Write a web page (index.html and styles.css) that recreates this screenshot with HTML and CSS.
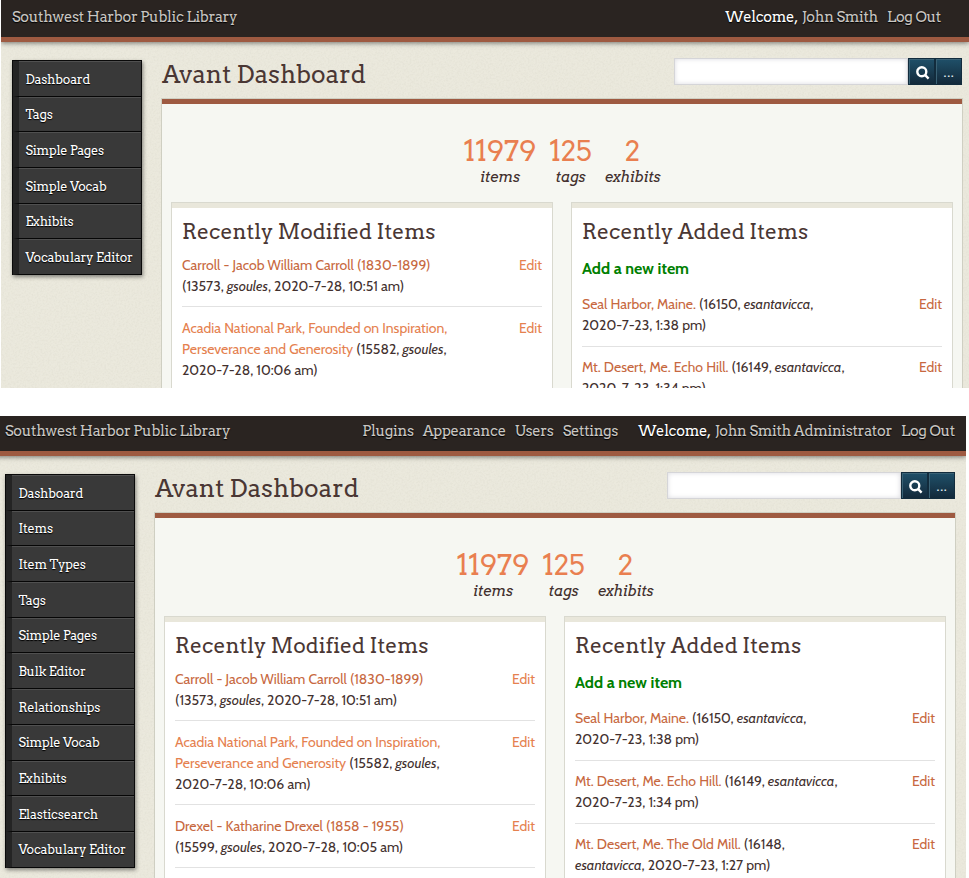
FILE: index.html
```html
<!DOCTYPE html>
<html lang="en">
<head>
<meta charset="utf-8">
<title>Avant Dashboard</title>
<link rel="stylesheet" href="styles.css">
</head>
<body>

<div class="shot shot-user">
  <div class="page">
    <header class="top">
      <a class="site">Southwest Harbor Public Library</a>
      <nav class="user"><span><b>Welcome,</b> John Smith</span><a>Log Out</a></nav>
    </header>
    <div class="columns">
      <nav class="side">
        <a>Dashboard</a><a>Tags</a><a>Simple Pages</a><a>Simple Vocab</a><a>Exhibits</a><a>Vocabulary Editor</a>
      </nav>
      <main>
        <div class="title">
          <h1>Avant Dashboard</h1>
          <div class="search">
            <div class="field"></div>
            <div class="btn"><svg viewBox="0 0 14 14" width="14" height="14"><circle cx="5.8" cy="5.8" r="4.5"/><path d="M9.2 9.2l3.4 3.4"/></svg></div>
            <div class="btn dots">...</div>
          </div>
        </div>
        <div class="content">
          <div class="stats">
            <div><b>11979</b><i>items</i></div><div><b>125</b><i>tags</i></div><div><b>2</b><i>exhibits</i></div>
          </div>
          <div class="panels">
            <section>
              <h2>Recently Modified Items</h2>
              <div class="row"><p><a>Carroll - Jacob William Carroll (1830-1899)</a><br>(13573, <i>gsoules</i>, 2020-7-28, 10:51 am)</p><a class="light">Edit</a></div>
              <div class="row"><p><a class="light">Acadia National Park, Founded on Inspiration,<br>Perseverance and Generosity</a> (15582, <i>gsoules</i>,<br>2020-7-28, 10:06 am)</p><a class="light">Edit</a></div>
            </section>
            <section>
              <h2>Recently Added Items</h2>
              <a class="add">Add a new item</a>
              <div class="row"><p><a>Seal Harbor, Maine.</a> (16150, <i>esantavicca</i>,<br>2020-7-23, 1:38 pm)</p><a>Edit</a></div>
              <div class="row"><p><a>Mt. Desert, Me. Echo Hill.</a> (16149, <i>esantavicca</i>,<br>2020-7-23, 1:34 pm)</p><a>Edit</a></div>
            </section>
          </div>
        </div>
      </main>
    </div>
  </div>
</div>

<div class="shot shot-admin">
  <div class="page">
    <header class="top">
      <a class="site">Southwest Harbor Public Library</a>
      <nav class="global"><a>Plugins</a><a>Appearance</a><a>Users</a><a>Settings</a></nav>
      <nav class="user"><span><b>Welcome,</b> John Smith Administrator</span><a>Log Out</a></nav>
    </header>
    <div class="columns">
      <nav class="side">
        <a>Dashboard</a><a>Items</a><a>Item Types</a><a>Tags</a><a>Simple Pages</a><a>Bulk Editor</a><a>Relationships</a><a>Simple Vocab</a><a>Exhibits</a><a>Elasticsearch</a><a>Vocabulary Editor</a>
      </nav>
      <main>
        <div class="title">
          <h1>Avant Dashboard</h1>
          <div class="search">
            <div class="field"></div>
            <div class="btn"><svg viewBox="0 0 14 14" width="14" height="14"><circle cx="5.8" cy="5.8" r="4.5"/><path d="M9.2 9.2l3.4 3.4"/></svg></div>
            <div class="btn dots">...</div>
          </div>
        </div>
        <div class="content">
          <div class="stats">
            <div><b>11979</b><i>items</i></div><div><b>125</b><i>tags</i></div><div><b>2</b><i>exhibits</i></div>
          </div>
          <div class="panels">
            <section>
              <h2>Recently Modified Items</h2>
              <div class="row"><p><a>Carroll - Jacob William Carroll (1830-1899)</a><br>(13573, <i>gsoules</i>, 2020-7-28, 10:51 am)</p><a class="light">Edit</a></div>
              <div class="row"><p><a class="light">Acadia National Park, Founded on Inspiration,<br>Perseverance and Generosity</a> (15582, <i>gsoules</i>,<br>2020-7-28, 10:06 am)</p><a class="light">Edit</a></div>
              <div class="row"><p><a>Drexel - Katharine Drexel (1858 - 1955)</a><br>(15599, <i>gsoules</i>, 2020-7-28, 10:05 am)</p><a class="light">Edit</a></div>
            </section>
            <section>
              <h2>Recently Added Items</h2>
              <a class="add">Add a new item</a>
              <div class="row"><p><a>Seal Harbor, Maine.</a> (16150, <i>esantavicca</i>,<br>2020-7-23, 1:38 pm)</p><a>Edit</a></div>
              <div class="row"><p><a>Mt. Desert, Me. Echo Hill.</a> (16149, <i>esantavicca</i>,<br>2020-7-23, 1:34 pm)</p><a>Edit</a></div>
              <div class="row"><p><a>Mt. Desert, Me. The Old Mill.</a> (16148,<br><i>esantavicca</i>, 2020-7-23, 1:27 pm)</p><a>Edit</a></div>
            </section>
          </div>
        </div>
      </main>
    </div>
  </div>
</div>

</body>
</html>
```
FILE: styles.css
```css
* { box-sizing: border-box; }
body { margin: 0; background: #fff; height: 878px; overflow: hidden; font: 14px/21px Cabin, Lato, sans-serif; color: #42302e; }
h1, h2, p { margin: 0; font-weight: normal; }

.shot { overflow: hidden; background: #ebe9dd url("data:image/svg+xml,%3Csvg xmlns='http://www.w3.org/2000/svg' width='200' height='200'%3E%3Cfilter id='n'%3E%3CfeTurbulence type='fractalNoise' baseFrequency='.55' numOctaves='2' stitchTiles='stitch'/%3E%3CfeColorMatrix values='0 0 0 0 .4 0 0 0 0 .38 0 0 0 0 .3 .2 0 0 0 -.075'/%3E%3C/filter%3E%3Crect width='200' height='200' filter='url(%23n)'/%3E%3C/svg%3E"); }
.shot-user { margin-left: 1px; width: 968px; height: 388px; }
.shot-admin { margin-top: 28px; width: 966px; height: 462px; }
.page { width: 968px; }
.shot-admin .page { width: 972px; margin: -2px 0 0 -6px; }

.top { display: flex; align-items: flex-start; height: 42px; padding: 6px 28px 0 11px; background: #2a2421; border-bottom: 5px solid #9e5a41; box-shadow: 0 1px 5px rgba(0,0,0,.5); font: 14.6px/22px Arvo, "DejaVu Serif Condensed", serif; letter-spacing: -.3px; color: #c9c6c2; text-shadow: 0 1px 1px #000; white-space: nowrap; }
.shot-admin .top { padding-right: 11px; }
.site { margin-right: auto; }
.global { display: flex; gap: 9px; margin-right: 20px; }
.user { display: flex; gap: 9px; }
.user b { font-weight: normal; color: #fff; margin-right: 1px; }

.columns { display: flex; align-items: flex-start; padding: 16px 0 0 11px; }
.side { width: 130px; flex: none; margin: 2px 20px 0 0; border: solid #0a0a0a; border-width: 1px 1px 0; background: #393939; box-shadow: 1px 2px 4px rgba(0,0,0,.45); font: 12.6px/34.7px Arvo, "DejaVu Serif Condensed", serif; letter-spacing: -.18px; color: #fff; text-shadow: 0 1px 1px #000; white-space: nowrap; }
.side a { display: block; height: 35.7px; padding: 1.6px 0 0 6.4px; border-left: 6px solid #242424; border-bottom: 1px solid #060606; box-shadow: inset 0 1px 0 #505050; }

main { width: 800px; flex: none; }
.title { display: flex; justify-content: space-between; height: 41px; }
h1 { font: 24.5px/32px Arvo, "DejaVu Serif Condensed", serif; color: #4a3734; }
.search { display: flex; height: 27px; }
.field { width: 234px; background: #fff; border: 1px solid #d5d5d8; box-shadow: inset 0 0 5px #dcdce0; }
.btn { width: 27px; display: flex; justify-content: center; align-items: center; padding: 3px 0 0 2px; background: linear-gradient(#1f5069, #13293a); border: 1px solid #122c3d; box-shadow: inset 1px 1px 0 #3a6275; color: #fff; }
.btn svg { fill: none; stroke: #fff; stroke-width: 2.4; }
.btn.dots { padding-top: 2px; padding-left: 1px; letter-spacing: .7px; color: #dde4e8; }

.content { border-top: 5px solid #9e5a41; background: #f6f7f2; box-shadow: 0 0 0 1px #cfcfc2; padding: 32px 9px 0; height: 400px; }
.stats { display: flex; justify-content: center; gap: 13px; height: 66px; font-family: Arvo, "DejaVu Serif Condensed", serif; text-align: center; }
.stats b { display: block; font-size: 28px; line-height: 31px; font-weight: normal; color: #e97f50; }
.stats i { display: block; font-size: 14.6px; letter-spacing: -.25px; }

.panels { display: grid; grid-template-columns: 382px 382px; gap: 18px; }
section { height: 350px; background: #fff; border: 1px solid #d9d9cf; padding: 0 10px; box-shadow: inset 0 5px 0 #e9e7db; }
h2 { font: 21px/28px Arvo, "DejaVu Serif Condensed", serif; color: #4a3734; margin: 15px 0 9px; }
.row { display: flex; justify-content: space-between; padding-bottom: 9px; border-bottom: 1px solid #e2e2e2; margin-bottom: 11px; white-space: nowrap; }
.add ~ .row { padding-bottom: 10px; margin-bottom: 10px; }
.row a { color: #c76840; }
.row a.light { color: #e5814f; }
.add { display: block; font-size: 16px; font-weight: bold; color: #008000; margin: 12px 0 15px; line-height: 21px; }
```
